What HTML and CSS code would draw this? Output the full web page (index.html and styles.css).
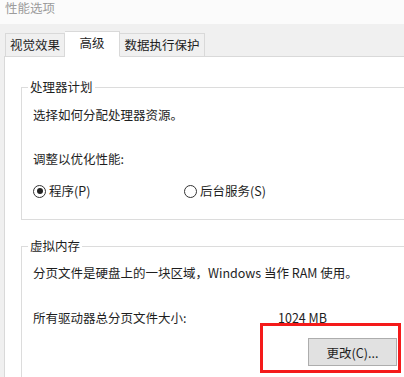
FILE: index.html
```html
<!DOCTYPE html>
<html lang="zh-CN">
<head>
    <meta charset="UTF-8">
    <meta name="viewport" content="width=device-width, initial-scale=1.0">
    <title>性能选项</title>
    <link rel="stylesheet" href="styles.css">
</head>
<body>
    <!-- Window title -->
    <div class="titlebar">性能选项</div>

    <!-- Tabs -->
    <div class="tabs">
        <div class="tab">视觉效果</div>
        <div class="tab selected">高级</div>
        <div class="tab">数据执行保护</div>
    </div>

    <!-- Tab page -->
    <div class="panel">
        <div class="group cpu">
            <span class="group-title">处理器计划</span>
            <p class="line">选择如何分配处理器资源。</p>
            <p class="line adjust">调整以优化性能:</p>
            <div class="radios">
                <label class="radio checked"><span class="dot"></span>程序(P)</label>
                <label class="radio"><span class="dot"></span>后台服务(S)</label>
            </div>
        </div>

        <div class="group memory">
            <span class="group-title">虚拟内存</span>
            <p class="line">分页文件是硬盘上的一块区域，Windows 当作 RAM 使用。</p>
            <div class="line size-row">
                <span class="size-label">所有驱动器总分页文件大小:</span>
                <span>1024 MB</span>
            </div>
            <button class="change-btn">更改(C)...</button>
        </div>
    </div>

    <!-- Red highlight -->
    <div class="highlight"></div>
</body>
</html>
```

FILE: styles.css
```css
/* General */
body {
    margin: 0;
    width: 404px;
    height: 377px;
    overflow: hidden;
    background: #f0f0f0;
    font-family: "Noto Sans CJK SC", "Microsoft YaHei", sans-serif;
    font-size: 12.5px;
    color: #1e1e1e;
    position: relative;
}

p {
    margin: 0;
}

/* Title bar */
.titlebar {
    height: 24px;
    background: #fbfbfb;
    color: #9c9c9c;
    padding-left: 5px;
    line-height: 16px;
    box-sizing: border-box;
    font-size: 12.5px;
}

/* Tabs */
.tabs {
    height: 33px;
    display: flex;
    align-items: flex-end;
    padding-left: 5px;
    position: relative;
    z-index: 1;
}

.tab {
    height: 23px;
    line-height: 22px;
    border: 1px solid #d9d9d9;
    border-bottom: none;
    background: #f0f0f0;
    box-sizing: border-box;
    text-align: center;
    margin-bottom: 1px;
}

.tab:nth-child(1) { width: 60px; }
.tab:nth-child(3) { width: 85px; border-left: none; }

.tab.selected {
    width: 55px;
    height: 26px;
    line-height: 22px;
    background: #fff;
    margin-bottom: 0;
    border-bottom: 1px solid #fff;
    border-left: none;
}

/* Tab page */
.panel {
    margin-left: 4px;
    margin-top: -1px;
    border-top: 1px solid #d9d9d9;
    border-left: 1px solid #d9d9d9;
    background: #fff;
    height: 321px;
    padding-left: 16px;
    padding-top: 30px;
    box-sizing: border-box;
    overflow: hidden;
}

/* Group boxes */
.group {
    position: relative;
    border: 1px solid #dcdcdc;
    border-right: none;
    padding-left: 11px;
    padding-top: 19px;
}

.group-title {
    position: absolute;
    top: -9px;
    left: 6px;
    padding: 0 2px;
    background: #fff;
    line-height: 16px;
}

.line {
    line-height: 16px;
    height: 16px;
}

.cpu {
    padding-bottom: 20px;
}

.adjust {
    margin-top: 28px;
}

.radios {
    display: flex;
    margin-top: 16px;
    height: 16px;
    line-height: 16px;
}

.radio {
    display: flex;
    align-items: center;
    gap: 3px;
}

.radio:first-child {
    width: 151px;
}

.dot {
    width: 11px;
    height: 11px;
    border: 1px solid #333;
    border-radius: 50%;
    position: relative;
}

.radio.checked .dot::after {
    content: "";
    position: absolute;
    left: 2.5px;
    top: 2.5px;
    width: 6px;
    height: 6px;
    border-radius: 50%;
    background: #222;
}

.memory {
    margin-top: 26px;
    height: 113px;
    padding-top: 18px;
    border-bottom: none;
}

.size-row {
    display: flex;
    margin-top: 29px;
}

.size-label {
    width: 245px;
}

.change-btn {
    display: block;
    margin-top: 12px;
    margin-left: 275px;
    width: 89px;
    height: 28px;
    background: #e1e1e1;
    border: 1px solid #adadad;
    font-family: inherit;
    font-size: 12.5px;
    color: #1e1e1e;
    padding: 0;
}

/* Red annotation box */
.highlight {
    position: absolute;
    left: 260px;
    top: 323px;
    width: 141px;
    height: 50px;
    border: 3px solid #f41a1a;
    box-sizing: border-box;
}
```
